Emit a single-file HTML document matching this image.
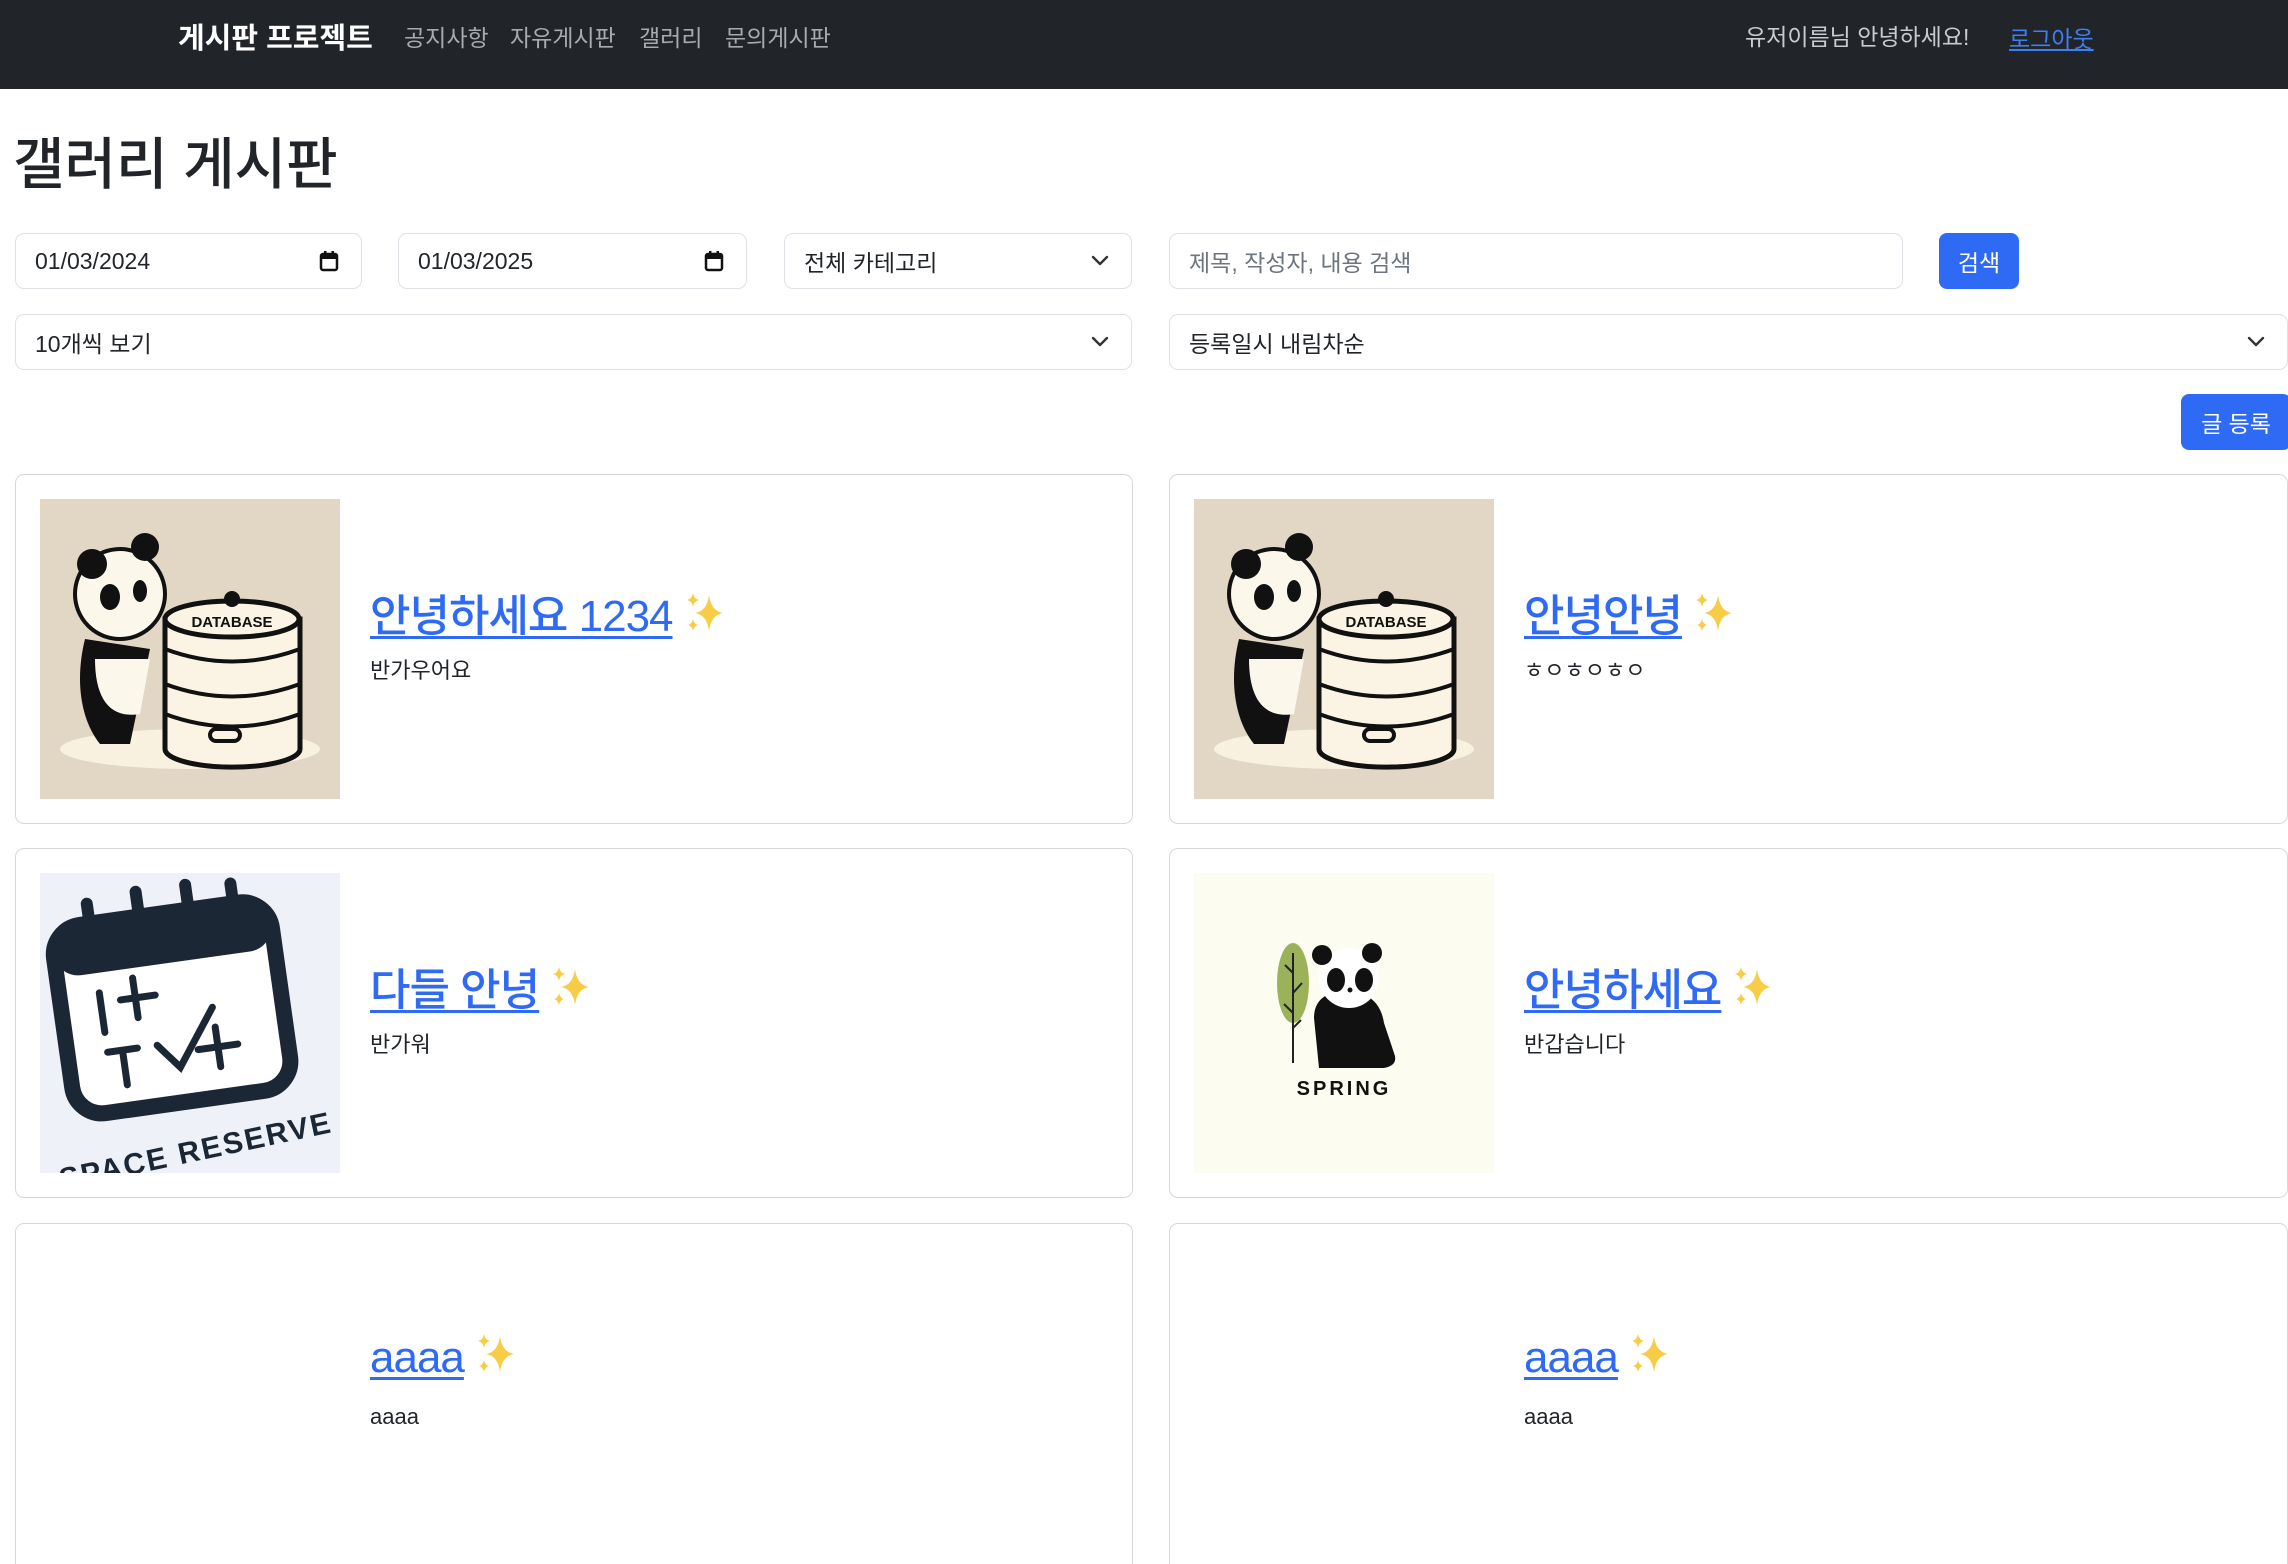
<!DOCTYPE html>
<html style="width:2288px;height:1564px;overflow:hidden"><head><meta charset="utf-8">
<style>
*{box-sizing:border-box;margin:0;padding:0}
body{width:2288px;height:1564px;overflow:hidden;background:#fff;font-family:"Liberation Sans","Noto Sans CJK KR",sans-serif;color:#212529;position:relative}
.nav{position:absolute;left:0;top:0;width:2288px;height:89px;background:#212529}
.a{position:absolute;white-space:nowrap}
.box{position:absolute;border:1.5px solid #dee2e6;border-radius:9px;background:#fff;font-size:23px;color:#212529;padding-left:19px;display:flex;align-items:center}
.chev{position:absolute;right:22px;top:50%;margin-top:-6px}
.card{position:absolute;border:1.5px solid #d5d8db;border-radius:9px;background:#fff}
.t{position:absolute;left:354px;font-size:44px;font-weight:500;color:#2f6af5;text-decoration:underline;text-decoration-thickness:3px;text-underline-offset:5px;white-space:nowrap;letter-spacing:-1px}
.d{position:absolute;left:354px;font-size:22px;color:#212529;white-space:nowrap}
.img{position:absolute;left:24px;top:24px;width:300px;height:300px}
.sp{display:inline-block;vertical-align:-4px;margin-left:10px}
</style></head><body>
<div class="nav">
<div class="a" style="left:178px;top:15px;font-size:29px;font-weight:bold;color:#fff">게시판 프로젝트</div>
<div class="a" style="left:404px;top:19px;font-size:23px;color:#a8abae">공지사항</div>
<div class="a" style="left:510px;top:19px;font-size:23px;color:#a8abae">자유게시판</div>
<div class="a" style="left:639px;top:19px;font-size:23px;color:#a8abae">갤러리</div>
<div class="a" style="left:725px;top:19px;font-size:23px;color:#a8abae">문의게시판</div>
<div class="a" style="left:1745px;top:18px;font-size:23px;color:#c9cbcd">유저이름님 안녕하세요!</div>
<div class="a" style="left:2009px;top:20px;font-size:23px;color:#3d7ff5;text-decoration:underline">로그아웃</div>
</div>
<div class="a" style="left:13px;top:120px;font-size:56px;font-weight:500;color:#212529">갤러리 게시판</div>

<div class="box" style="left:15px;top:233px;width:347px;height:56px">01/03/2024<svg class="chev" style="margin-top:-11px" width="20" height="22" viewBox="0 0 20 22"><rect x="2" y="4" width="16" height="16" rx="2" fill="none" stroke="#111" stroke-width="2.5"/><rect x="2" y="4" width="16" height="5" fill="#111"/><rect x="5" y="1" width="2.5" height="5" fill="#111"/><rect x="12.5" y="1" width="2.5" height="5" fill="#111"/></svg></div>
<div class="box" style="left:398px;top:233px;width:349px;height:56px">01/03/2025<svg class="chev" style="margin-top:-11px" width="20" height="22" viewBox="0 0 20 22"><rect x="2" y="4" width="16" height="16" rx="2" fill="none" stroke="#111" stroke-width="2.5"/><rect x="2" y="4" width="16" height="5" fill="#111"/><rect x="5" y="1" width="2.5" height="5" fill="#111"/><rect x="12.5" y="1" width="2.5" height="5" fill="#111"/></svg></div>
<div class="box" style="left:784px;top:233px;width:348px;height:56px">전체 카테고리<svg class="chev" width="18" height="12" viewBox="0 0 18 12"><path d="M2 2l7 7 7-7" fill="none" stroke="#333" stroke-width="2.4" stroke-linecap="round" stroke-linejoin="round"/></svg></div>
<div class="box" style="left:1169px;top:233px;width:734px;height:56px;color:#6c757d">제목, 작성자, 내용 검색</div>
<div class="a" style="left:1939px;top:233px;width:80px;height:56px;background:#2f6af5;border-radius:8px;color:#fff;font-size:23px;display:flex;align-items:center;justify-content:center">검색</div>

<div class="box" style="left:15px;top:314px;width:1117px;height:56px">10개씩 보기<svg class="chev" width="18" height="12" viewBox="0 0 18 12"><path d="M2 2l7 7 7-7" fill="none" stroke="#333" stroke-width="2.4" stroke-linecap="round" stroke-linejoin="round"/></svg></div>
<div class="box" style="left:1169px;top:314px;width:1119px;height:56px">등록일시 내림차순<svg class="chev" width="18" height="12" viewBox="0 0 18 12"><path d="M2 2l7 7 7-7" fill="none" stroke="#333" stroke-width="2.4" stroke-linecap="round" stroke-linejoin="round"/></svg></div>
<div class="a" style="left:2181px;top:394px;width:110px;height:56px;background:#2f6af5;border-radius:8px;color:#fff;font-size:23px;display:flex;align-items:center;justify-content:center">글 등록</div>

<!-- card 1 -->
<div class="card" style="left:15px;top:474px;width:1118px;height:350px">
<svg class="img" viewBox="0 0 300 300"><rect width="300" height="300" fill="#e2d6c5"/><ellipse cx="150" cy="250" rx="130" ry="20" fill="#f8f1e0"/>
<circle cx="80" cy="95" r="45" fill="#fbf7ea" stroke="#111" stroke-width="4"/><circle cx="52" cy="65" r="15" fill="#111"/><circle cx="105" cy="48" r="14" fill="#111"/><ellipse cx="70" cy="98" rx="10" ry="13" fill="#111"/><ellipse cx="100" cy="92" rx="7" ry="11" fill="#111"/>
<path d="M45 140 C35 180 40 220 60 245 L90 245 L110 150 Z" fill="#111"/><path d="M55 160 C55 200 70 220 100 215 L110 160 Z" fill="#fbf7ea"/>
<path d="M125 120 h135 v130 a67 18 0 0 1 -135 0z" fill="#fbf4e4" stroke="#111" stroke-width="5"/><ellipse cx="192" cy="120" rx="67" ry="18" fill="#fbf4e4" stroke="#111" stroke-width="5"/>
<path d="M125 150 q67 25 135 0 M125 185 q67 25 135 0 M125 215 q67 25 135 0" fill="none" stroke="#111" stroke-width="4"/><rect x="170" y="230" width="30" height="12" rx="6" fill="none" stroke="#111" stroke-width="4"/><circle cx="192" cy="100" r="8" fill="#111"/>
<text x="192" y="128" font-family="Liberation Sans" font-weight="bold" font-size="15" text-anchor="middle" fill="#111">DATABASE</text></svg>
<div class="t" style="top:105px">안녕하세요 1234<svg class="sp" width="44" height="44" viewBox="0 0 44 44"><path d="M26 4 Q28 20 40 22 Q28 24 26 40 Q24 24 12 22 Q24 20 26 4Z" fill="#f7cc46"/><path d="M10 2 Q11 8 16 9 Q11 10 10 16 Q9 10 4 9 Q9 8 10 2Z" fill="#f7cc46"/><path d="M10 28 Q11 33 15 34 Q11 35 10 40 Q9 35 5 34 Q9 33 10 28Z" fill="#f7cc46"/></svg></div>
<div class="d" style="top:178px">반가우어요</div>
</div>
<!-- card 2 -->
<div class="card" style="left:1169px;top:474px;width:1119px;height:350px">
<svg class="img" viewBox="0 0 300 300"><rect width="300" height="300" fill="#e2d6c5"/><ellipse cx="150" cy="250" rx="130" ry="20" fill="#f8f1e0"/>
<circle cx="80" cy="95" r="45" fill="#fbf7ea" stroke="#111" stroke-width="4"/><circle cx="52" cy="65" r="15" fill="#111"/><circle cx="105" cy="48" r="14" fill="#111"/><ellipse cx="70" cy="98" rx="10" ry="13" fill="#111"/><ellipse cx="100" cy="92" rx="7" ry="11" fill="#111"/>
<path d="M45 140 C35 180 40 220 60 245 L90 245 L110 150 Z" fill="#111"/><path d="M55 160 C55 200 70 220 100 215 L110 160 Z" fill="#fbf7ea"/>
<path d="M125 120 h135 v130 a67 18 0 0 1 -135 0z" fill="#fbf4e4" stroke="#111" stroke-width="5"/><ellipse cx="192" cy="120" rx="67" ry="18" fill="#fbf4e4" stroke="#111" stroke-width="5"/>
<path d="M125 150 q67 25 135 0 M125 185 q67 25 135 0 M125 215 q67 25 135 0" fill="none" stroke="#111" stroke-width="4"/><rect x="170" y="230" width="30" height="12" rx="6" fill="none" stroke="#111" stroke-width="4"/><circle cx="192" cy="100" r="8" fill="#111"/>
<text x="192" y="128" font-family="Liberation Sans" font-weight="bold" font-size="15" text-anchor="middle" fill="#111">DATABASE</text></svg>
<div class="t" style="top:105px">안녕안녕<svg class="sp" width="44" height="44" viewBox="0 0 44 44"><path d="M26 4 Q28 20 40 22 Q28 24 26 40 Q24 24 12 22 Q24 20 26 4Z" fill="#f7cc46"/><path d="M10 2 Q11 8 16 9 Q11 10 10 16 Q9 10 4 9 Q9 8 10 2Z" fill="#f7cc46"/><path d="M10 28 Q11 33 15 34 Q11 35 10 40 Q9 35 5 34 Q9 33 10 28Z" fill="#f7cc46"/></svg></div>
<div class="d" style="top:178px">ㅎㅇㅎㅇㅎㅇ</div>
</div>
<!-- card 3 -->
<div class="card" style="left:15px;top:848px;width:1118px;height:350px">
<svg class="img" viewBox="0 0 300 300"><rect width="300" height="300" fill="#eef1f7"/>
<g transform="rotate(-8 130 120)"><rect x="20" y="40" width="220" height="190" rx="30" fill="#fff" stroke="#1c2736" stroke-width="16"/><rect x="20" y="40" width="220" height="50" rx="25" fill="#1c2736"/>
<path d="M60 20v45 M110 15v45 M160 15v45 M205 20v45" stroke="#1c2736" stroke-width="12" stroke-linecap="round"/>
<path d="M60 110v40 M95 100v40 M80 120h35 M60 170h30 M75 170v35 M110 170l20 25 40-55 M170 160v40 M150 180h40" fill="none" stroke="#1c2736" stroke-width="7" stroke-linecap="round"/></g>
<text x="155" y="288" font-family="Liberation Sans" font-weight="bold" font-size="30" text-anchor="middle" fill="#1c2736" transform="rotate(-12 155 275)" letter-spacing="2">SPACE RESERVE</text></svg>
<div class="t" style="top:105px">다들 안녕<svg class="sp" width="44" height="44" viewBox="0 0 44 44"><path d="M26 4 Q28 20 40 22 Q28 24 26 40 Q24 24 12 22 Q24 20 26 4Z" fill="#f7cc46"/><path d="M10 2 Q11 8 16 9 Q11 10 10 16 Q9 10 4 9 Q9 8 10 2Z" fill="#f7cc46"/><path d="M10 28 Q11 33 15 34 Q11 35 10 40 Q9 35 5 34 Q9 33 10 28Z" fill="#f7cc46"/></svg></div>
<div class="d" style="top:178px">반가워</div>
</div>
<!-- card 4 -->
<div class="card" style="left:1169px;top:848px;width:1119px;height:350px">
<svg class="img" viewBox="0 0 300 300"><rect width="300" height="300" fill="#fcfcf0"/>
<ellipse cx="99" cy="110" rx="16" ry="40" fill="#9bb25a"/><path d="M99 80v110 M99 100l-8-8 M99 120l9-10 M99 140l-9-9 M99 155l8-8" stroke="#222" stroke-width="2" fill="none"/>
<path d="M120 145 Q120 120 150 118 Q185 118 190 150 L200 180 Q205 192 190 195 L125 195 Z" fill="#111"/>
<circle cx="155" cy="105" r="30" fill="#fff"/><circle cx="128" cy="82" r="10" fill="#111"/><circle cx="178" cy="80" r="10" fill="#111"/><ellipse cx="142" cy="107" rx="9" ry="12" fill="#111"/><ellipse cx="170" cy="107" rx="9" ry="12" fill="#111"/><circle cx="156" cy="117" r="2.5" fill="#111"/>
<text x="150" y="222" font-family="Liberation Sans" font-weight="bold" font-size="20" text-anchor="middle" fill="#111" letter-spacing="3">SPRING</text></svg>
<div class="t" style="top:105px">안녕하세요<svg class="sp" width="44" height="44" viewBox="0 0 44 44"><path d="M26 4 Q28 20 40 22 Q28 24 26 40 Q24 24 12 22 Q24 20 26 4Z" fill="#f7cc46"/><path d="M10 2 Q11 8 16 9 Q11 10 10 16 Q9 10 4 9 Q9 8 10 2Z" fill="#f7cc46"/><path d="M10 28 Q11 33 15 34 Q11 35 10 40 Q9 35 5 34 Q9 33 10 28Z" fill="#f7cc46"/></svg></div>
<div class="d" style="top:178px">반갑습니다</div>
</div>
<!-- card 5 -->
<div class="card" style="left:15px;top:1223px;width:1118px;height:360px">
<div class="t" style="top:108px">aaaa<svg class="sp" width="44" height="44" viewBox="0 0 44 44"><path d="M26 4 Q28 20 40 22 Q28 24 26 40 Q24 24 12 22 Q24 20 26 4Z" fill="#f7cc46"/><path d="M10 2 Q11 8 16 9 Q11 10 10 16 Q9 10 4 9 Q9 8 10 2Z" fill="#f7cc46"/><path d="M10 28 Q11 33 15 34 Q11 35 10 40 Q9 35 5 34 Q9 33 10 28Z" fill="#f7cc46"/></svg></div>
<div class="d" style="top:180px">aaaa</div>
</div>
<!-- card 6 -->
<div class="card" style="left:1169px;top:1223px;width:1119px;height:360px">
<div class="t" style="top:108px">aaaa<svg class="sp" width="44" height="44" viewBox="0 0 44 44"><path d="M26 4 Q28 20 40 22 Q28 24 26 40 Q24 24 12 22 Q24 20 26 4Z" fill="#f7cc46"/><path d="M10 2 Q11 8 16 9 Q11 10 10 16 Q9 10 4 9 Q9 8 10 2Z" fill="#f7cc46"/><path d="M10 28 Q11 33 15 34 Q11 35 10 40 Q9 35 5 34 Q9 33 10 28Z" fill="#f7cc46"/></svg></div>
<div class="d" style="top:180px">aaaa</div>
</div>
</body></html>
